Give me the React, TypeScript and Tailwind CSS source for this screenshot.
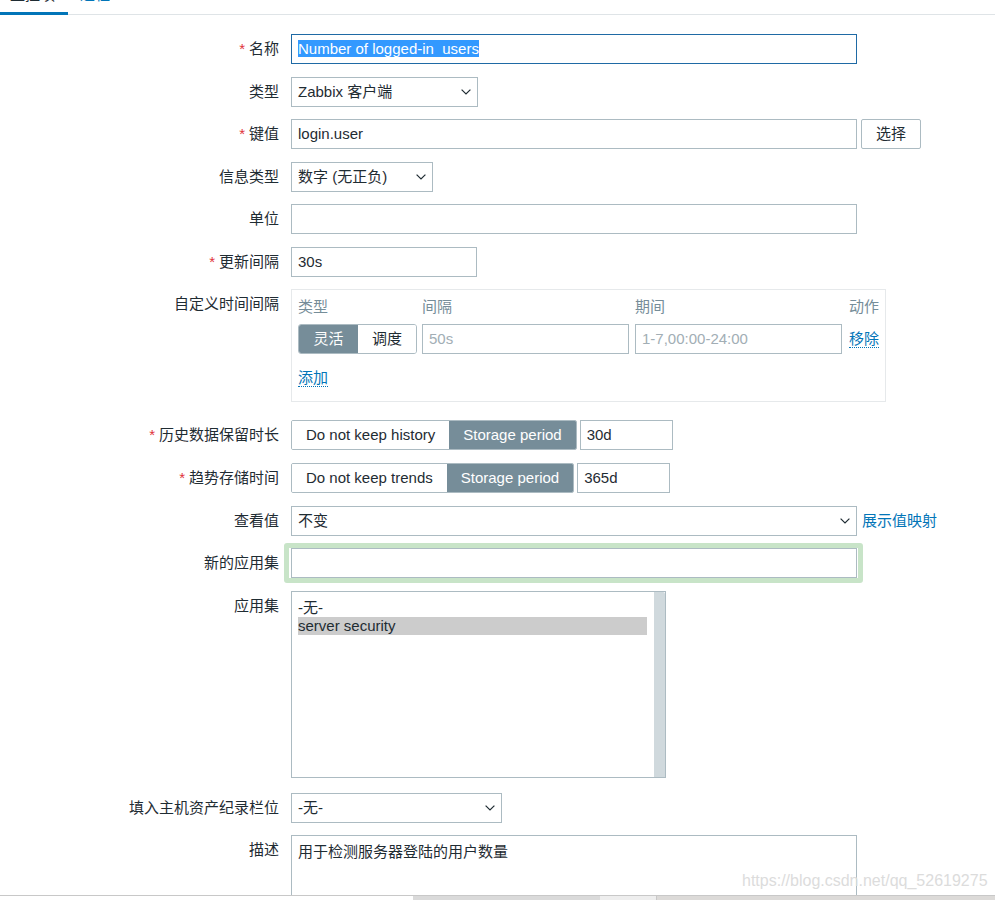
import type { ReactNode } from "react"

const box = "h-[30px] border bg-white px-[6px] leading-[28px]"
const input = `${box} border-[#acbbc2]`
const link = "text-[#0275b8]"
const dotted = "border-b border-dotted border-[#0275b8] leading-[17px]"

function Chevron() {
  return (
    <svg width="10" height="6" viewBox="0 0 10 6" fill="none" className="shrink-0">
      <path d="M0.6 0.6 5 5 9.4 0.6" stroke="#1f2c33" strokeWidth="1.2" />
    </svg>
  )
}

function Select({ width, value }: { width: string; value: string }) {
  return (
    <div className={`${input} ${width} flex items-center justify-between pr-[6px]`}>
      <span>{value}</span>
      <Chevron />
    </div>
  )
}

interface FieldProps {
  label: string
  required?: boolean
  className?: string
  labelClass?: string
  children: ReactNode
}

function Field({ label, required, className = "", labelClass = "pt-[6px]", children }: FieldProps) {
  return (
    <div className={`flex ${className}`}>
      <div className={`w-[279px] shrink-0 text-right leading-[18px] ${labelClass}`}>
        {required && <span className="mr-[4px] text-[#e0323a]">*</span>}
        {label}
      </div>
      <div className="ml-[12px] flex min-w-0 items-start">{children}</div>
    </div>
  )
}

function Toggle({ options, active }: { options: string[]; active: number }) {
  return (
    <div className="flex h-[30px] overflow-hidden rounded-[2px] border border-[#acbbc2]">
      {options.map((o, i) => (
        <div
          key={o}
          className={`whitespace-nowrap px-[14px] leading-[28px] ${
            i === active ? "bg-[#768d99] text-white" : "bg-white"
          }`}
        >
          {o}
        </div>
      ))}
    </div>
  )
}

export default function App() {
  return (
    <div className="relative flex h-[900px] w-[995px] flex-col overflow-hidden bg-white text-[15px] text-[#1f2c33] font-['Liberation_Sans','Noto_Sans_CJK_SC',sans-serif]">
      {/* tabs, scrolled half out of view */}
      <div className="flex h-[15px] shrink-0 border-b border-[#dfe4e7]">
        <div className="h-[15px] w-[68px] overflow-hidden border-b-[3px] border-[#0275b8] pl-[10px]">
          <div className="-mt-[14px] leading-[18px]">监控项</div>
        </div>
        <div className="h-[14px] overflow-hidden pl-[12px]">
          <div className={`-mt-[14px] leading-[18px] ${link}`}>进程</div>
        </div>
      </div>

      <div className="flex-1 overflow-hidden pt-[19px]">
        <Field label="名称" required>
          <div className={`${box} w-[566px] border-[#1f6aa5]`}>
            <span className="whitespace-pre bg-[#3399ff] text-white">Number of logged-in  users</span>
          </div>
        </Field>

        <Field label="类型" className="mt-[13px]">
          <Select width="w-[187px]" value="Zabbix 客户端" />
        </Field>

        <Field label="键值" required className="mt-[12px]">
          <div className={`${input} w-[566px]`}>login.user</div>
          <div className="ml-[4px] h-[30px] w-[60px] rounded-[2px] border border-[#acbbc2] text-center leading-[28px]">
            选择
          </div>
        </Field>

        <Field label="信息类型" className="mt-[13px]">
          <Select width="w-[142px]" value="数字 (无正负)" />
        </Field>

        <Field label="单位" className="mt-[12px]">
          <div className={`${input} w-[566px]`} />
        </Field>

        <Field label="更新间隔" required className="mt-[13px]">
          <div className={`${input} w-[186px]`}>30s</div>
        </Field>

        <Field label="自定义时间间隔" className="mt-[12px]">
          <div className="h-[113px] w-[595px] border border-[#e6e9eb] pl-[6px] pt-[8px]">
            <div className="grid grid-cols-[124px_213px_214px_auto] leading-[18px] text-[#768d99]">
              <div>类型</div>
              <div>间隔</div>
              <div>期间</div>
              <div>动作</div>
            </div>
            <div className="mt-[8px] grid grid-cols-[124px_213px_214px_auto] items-center">
              <div className="flex h-[30px] w-[119px] overflow-hidden rounded-[3px] border border-[#acbbc2]">
                <div className="w-[59px] bg-[#768d99] text-center leading-[28px] text-white">灵活</div>
                <div className="flex-1 bg-white text-center leading-[28px]">调度</div>
              </div>
              <div className={`${input} w-[207px] text-[#a2aeb5]`}>50s</div>
              <div className={`${input} w-[207px] text-[#a2aeb5]`}>1-7,00:00-24:00</div>
              <div>
                <span className={`${link} ${dotted}`}>移除</span>
              </div>
            </div>
            <div className="mt-[15px] leading-[18px]">
              <span className={`${link} border-b border-dotted border-[#0275b8]`}>添加</span>
            </div>
          </div>
        </Field>

        <Field label="历史数据保留时长" required className="mt-[18px]">
          <Toggle options={["Do not keep history", "Storage period"]} active={1} />
          <div className={`${input} ml-[3px] w-[93px]`}>30d</div>
        </Field>

        <Field label="趋势存储时间" required className="mt-[13px]">
          <Toggle options={["Do not keep trends", "Storage period"]} active={1} />
          <div className={`${input} ml-[3px] w-[93px]`}>365d</div>
        </Field>

        <Field label="查看值" className="mt-[13px]">
          <Select width="w-[566px]" value="不变" />
          <span className={`ml-[5px] leading-[30px] ${link}`}>展示值映射</span>
        </Field>

        <Field label="新的应用集" className="mt-[7px]" labelClass="pt-[11px]">
          <div className="-ml-[7px] rounded-[3px] border-[5px] border-[#c8e4c8] pl-[2px] pr-[1px]">
            <div className={`${input} w-[566px]`} />
          </div>
        </Field>

        <Field label="应用集" className="mt-[8px]">
          <div className="flex h-[187px] w-[375px] border border-[#acbbc2]">
            <div className="flex-1 pl-[6px] pr-[7px] pt-[7px] leading-[18px]">
              <div>-无-</div>
              <div className="bg-[#cccccc]">server security</div>
            </div>
            <div className="w-[11px] rounded-tr-[2px] bg-[#d0d9dd]" />
          </div>
        </Field>

        <Field label="填入主机资产纪录栏位" className="mt-[15px]">
          <Select width="w-[211px]" value="-无-" />
        </Field>

        <Field label="描述" className="mt-[12px]">
          <div className="h-[80px] w-[566px] border border-[#acbbc2] px-[6px] pt-[7px] leading-[18px]">
            用于检测服务器登陆的用户数量
          </div>
        </Field>
      </div>

      <div className="flex h-[5px] shrink-0 border-t border-[#c8c8c8]">
        <div className="w-[413px] bg-white" />
        <div className="w-[187px] bg-[#dadada]" />
        <div className="w-[57px] border-r border-[#c8c8c8] bg-[#eeeeee]" />
        <div className="flex-1 bg-[#dcdad8]" />
      </div>

      <div className="pointer-events-none absolute left-[742px] top-[872px] text-[16px] leading-[18px] text-[#dcdcdc]">
        https://blog.csdn.net/qq_52619275
      </div>
    </div>
  )
}
